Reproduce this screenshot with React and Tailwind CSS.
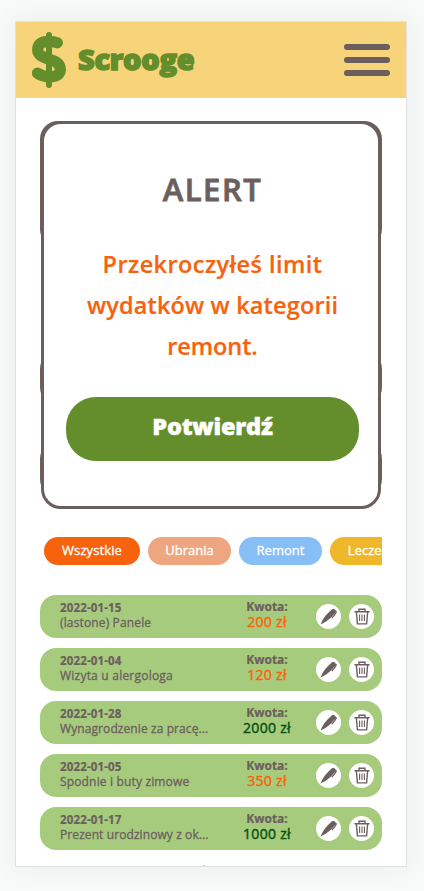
import React from "react";

const rows = [
  { date: "2022-01-15", title: "(lastone) Panele", amount: "200 zł", tone: "text-[#f7630c]", fit: "tracking-[0.14px]" },
  { date: "2022-01-04", title: "Wizyta u alergologa", amount: "120 zł", tone: "text-[#f7630c]", fit: "tracking-[0.22px]" },
  { date: "2022-01-28", title: "Wynagrodzenie za pracę...", amount: "2000 zł", tone: "text-[#06500f]", fit: "tracking-[0.09px]" },
  { date: "2022-01-05", title: "Spodnie i buty zimowe", amount: "350 zł", tone: "text-[#f7630c]", fit: "tracking-[0.16px]" },
  { date: "2022-01-17", title: "Prezent urodzinowy z ok...", amount: "1000 zł", tone: "text-[#06500f]", fit: "tracking-[0.09px]" },
];

function Dollar() {
  return (
    <svg className="h-14 w-[34px] shrink-0" viewBox="0 0 34 56" fill="none" stroke="#638e2b" strokeLinecap="round">
      <path d="M17 3V53" strokeWidth="6" />
      <path d="M25.3 10.800C22 9.500 19 9.300 16.500 9.300C10 9.300 5.700 12 5.700 17.500C5.700 23 10 25 17 27.200C24 29.500 28.300 31.500 28.300 37.500C28.300 42.500 24 44.700 18 44.700C12 44.700 9 43.500 5.500 41.200" strokeWidth="11.300" />
    </svg>
  );
}

function Pen() {
  return (
    <svg className="h-[17px] w-[17px]" viewBox="0 0 17 17" fill="#6b5f5e">
      <path d="M.5 16.500C2 12.500 4.500 8.500 8 5L12.300 1L14.500 1.500L15.500 4.500L11 9.500C8 12.500 4.500 14.600 .5 16.500Z" />
      <path d="M13.200 1.200L16.200 4L14.600 6.900L11.800 10.200" fill="none" stroke="#6b5f5e" strokeWidth="1.300" />
    </svg>
  );
}

function Trash() {
  return (
    <svg className="h-[17px] w-[16px]" viewBox="0 0 16 17" fill="none" stroke="#6b5f5e" strokeWidth="1.400">
      <path d="M.5 3.800H15.500M5 3.500V1.200H11V3.500M2.400 4.500L3.400 15.900H12.600L13.600 4.500" />
      <path d="M5.600 6.500V13M8 6.500V13M10.400 6.500V13" strokeWidth="1.100" />
    </svg>
  );
}

function Row({ date, title, amount, tone, fit }) {
  return (
    <li className="flex h-[43px] shrink-0 items-center rounded-[16px] bg-[#a7cb7d] pl-5 pr-2 text-[#6b5f5e]">
      <div className="w-[162px] whitespace-nowrap pb-[3px] text-[12px] leading-[15px]">
        <p className="text-[11.5px] font-bold tracking-[0.15px] [-webkit-text-stroke:0.2px_currentColor]">{date}</p>
        <p className={"[-webkit-text-stroke:0.3px_currentColor] " + fit}>{title}</p>
      </div>
      <div className="w-[90px] whitespace-nowrap pb-[3px] text-center">
        <p className="text-[12px] font-bold leading-[14px] [-webkit-text-stroke:0.2px_currentColor]">Kwota:</p>
        <p className={"text-[14px] leading-4 tracking-[0.3px] [-webkit-text-stroke:0.4px_currentColor] " + tone}>{amount}</p>
      </div>
      <div className="ml-1 flex gap-2">
        <button className="flex size-[25px] items-center justify-center rounded-full bg-white"><Pen /></button>
        <button className="flex size-[25px] items-center justify-center rounded-full bg-white"><Trash /></button>
      </div>
    </li>
  );
}

export default function App() {
  return (
    <div className="h-[891px] w-[424px] overflow-hidden bg-[#f8faf9] pl-[15px] pt-[21px] font-['Open_Sans','Noto_Sans',sans-serif]">
      <main className="flex h-[846px] w-[392px] flex-col overflow-hidden border border-[#e1e3e2] bg-white shadow-[0_0_30px_rgba(0,0,0,0.06)]">
        <header className="flex h-[76px] shrink-0 items-center bg-[#f7d479] px-4">
          <Dollar />
          <h1 className="ml-3 pb-[3px] text-[29px] font-extrabold leading-none tracking-[-0.3px] text-[#638e2b] [-webkit-text-stroke:1.500px_#638e2b]">Scrooge</h1>
          <button className="ml-auto flex w-[46px] flex-col gap-[7px]">
            <span className="h-1.5 rounded-full bg-[#6b5f5e]" />
            <span className="h-1.5 rounded-full bg-[#6b5f5e]" />
            <span className="h-1.5 rounded-full bg-[#6b5f5e]" />
          </button>
        </header>

        <section className="relative mx-6 mt-[23px] h-[388px] shrink-0">
          <span className="absolute left-0 top-0 h-[126px] w-[342px] rounded-[18px] bg-[#6b5f5e]" />
          <span className="absolute left-0 top-[228px] h-[58px] w-[342px] rounded-[20px] bg-[#6b5f5e]" />
          <span className="absolute left-0 top-[318px] h-[60px] w-[342px] rounded-[20px] bg-[#6b5f5e]" />
          <div className="relative mx-px flex h-full flex-col items-center rounded-[20px] border-[3px] border-[#6b5f5e] bg-white pl-[3px]">
            <h2 className="mt-[45px] text-[31px] font-semibold leading-[40px] tracking-[1.5px] text-[#6b5f5e] [-webkit-text-stroke:0.8px_#6b5f5e]">ALERT</h2>
            <div className="mt-[35px] flex flex-col items-center whitespace-nowrap text-[23.5px] font-semibold leading-[41px] text-[#f7630c] [-webkit-text-stroke:0.2px_#f7630c]">
              <p className="tracking-[0.43px]">Przekroczyłeś limit</p>
              <p className="tracking-[0.15px]">wydatków w kategorii</p>
              <p className="tracking-[-0.1px]">remont.</p>
            </div>
            <button className="mt-[30px] flex h-16 w-[293px] shrink-0 items-center justify-center rounded-[30px] bg-[#638e2b] pb-1 text-[23.5px] font-extrabold tracking-[-0.2px] text-white [-webkit-text-stroke:0.5px_white]">Potwierdź</button>
          </div>
        </section>

        <nav className="mx-6 mt-7 flex h-7 shrink-0 gap-2 overflow-hidden pl-1 text-[13px] text-white [-webkit-text-stroke:0.3px_white]">
          <button className="h-7 w-24 shrink-0 rounded-full bg-[#f7630c] tracking-[0.1px]">Wszystkie</button>
          <button className="h-7 w-[83px] shrink-0 rounded-full bg-[#eea680]">Ubrania</button>
          <button className="h-7 w-[83px] shrink-0 rounded-full bg-[#85bff5]">Remont</button>
          <button className="h-7 w-[92px] shrink-0 rounded-full bg-[#efb82b] pr-1">Leczenie</button>
        </nav>

        <ul className="mx-6 mt-[30px] flex shrink-0 flex-col gap-2.5">
          {rows.map((row) => <Row key={row.date} {...row} />)}
        </ul>
        <span className="ml-[187px] mt-[15px] size-0.5 shrink-0 rounded-full bg-[#b9b9b9]" />
      </main>
    </div>
  );
}
